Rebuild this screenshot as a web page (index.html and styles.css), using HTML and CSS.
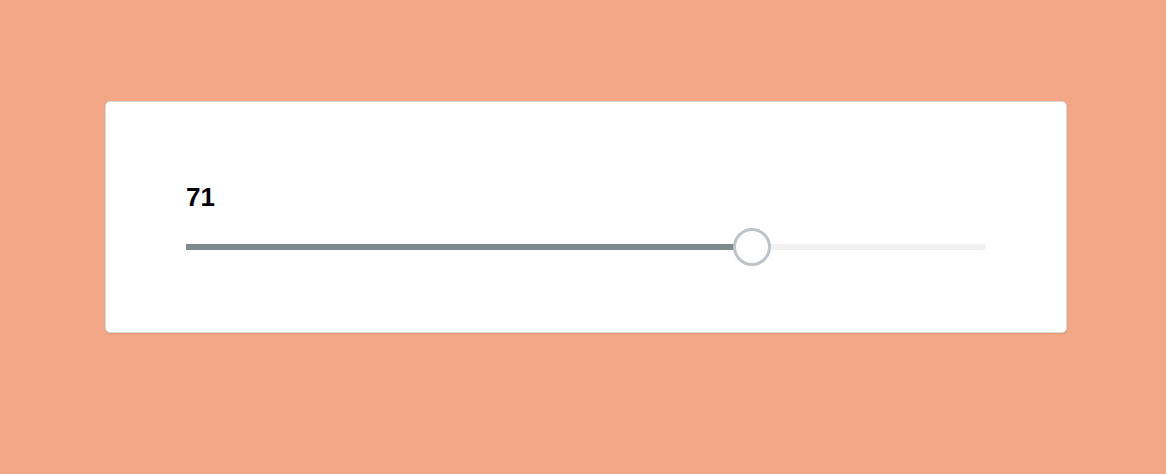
FILE: index.html
```html
<!DOCTYPE html>
<html>
<head>
<meta charset="utf-8">
<link rel="stylesheet" href="styles.css">
</head>
<body>
<div class="card">
  <div class="value">71</div>
  <div class="track">
    <div class="fill" style="width: 70.75%"></div>
    <div class="thumb" style="left: calc(70.75% - 19px)"></div>
  </div>
</div>
</body>
</html>
```

FILE: styles.css
```css
html, body {
  margin: 0;
  padding: 0;
}
body {
  background: #f2a886;
  font-family: "Liberation Sans", Arial, sans-serif;
  height: 474px;
  overflow: hidden;
}
.card {
  margin: 101px 0 0 105px;
  width: 962px;
  box-sizing: border-box;
  background: #ffffff;
  border: 1px solid #d9d9d9;
  border-radius: 5px;
  box-shadow: 0 1px 2px rgba(0, 0, 0, 0.1);
  padding: 81px 80px 82px 80px;
}
.value {
  font-size: 26px;
  font-weight: bold;
  line-height: 28px;
  color: #000;
  margin-bottom: 33px;
}
.track {
  position: relative;
  height: 6px;
  background: #f0f0f0;
  border-radius: 3px;
}
.fill {
  height: 100%;
  background: #7f8c8d;
}
.thumb {
  position: absolute;
  top: -16px;
  width: 38px;
  height: 38px;
  box-sizing: border-box;
  border: 3px solid #bdc3c7;
  border-radius: 50%;
  background: #fff;
}
```
